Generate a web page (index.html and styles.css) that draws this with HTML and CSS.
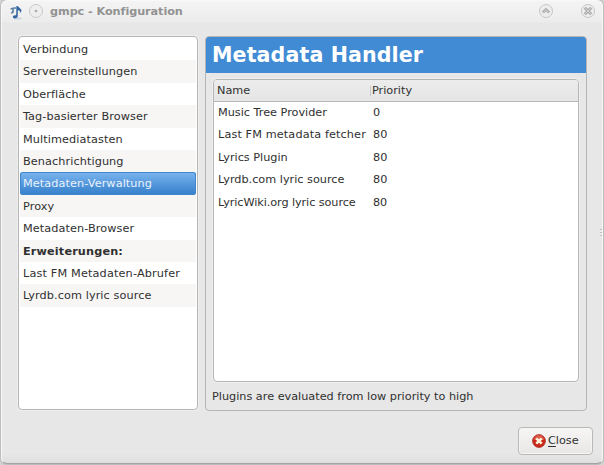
FILE: index.html
```html
<!DOCTYPE html>
<html lang="de">
<head>
<meta charset="utf-8">
<title>gmpc - Konfiguration</title>
<link rel="stylesheet" href="styles.css">
</head>
<body>
<div class="window">
  <header class="titlebar">
    <svg class="note" width="14" height="17" viewBox="0 0 14 17"><ellipse cx="9" cy="14.6" rx="4" ry="1" fill="#c9d4e0"/><path d="M7.4 2 9 2.3 12.5 6 11.8 9 10.3 6.6 8.8 6.2V12.3Q8.2 14.5 5.5 14.5 3.5 14.2 3.8 12.5 4.5 11 7.2 11.2z" fill="#34659f"/><path d="M1.5 4.3 4.8 3.2V8.2Q4 9.9 2 9.5 1.3 8.4 3.3 7.5V5.2L1.5 5.5z" fill="#54799f"/><path d="M4.5 3.4 7.8 2.8V4.8L4.5 5.3z" fill="#6e94bd"/></svg>
    <svg class="menu" width="16" height="16" viewBox="0 0 16 16"><circle cx="8" cy="8" r="6.5" fill="#eee" stroke="#c9c9c9"/><circle cx="8" cy="8" r="1.3" fill="#aaa"/></svg>
    <h1 class="caption">gmpc - Konfiguration</h1>
    <svg class="shade" width="16" height="16" viewBox="0 0 16 16"><circle cx="8" cy="8" r="6.5" fill="#eee" stroke="#c6c6c6"/><path d="M4.8 9.6 8 6.6 11.2 9.6" fill="none" stroke="#aaa" stroke-width="2.8"/><path d="M5 9.5 8 6.7 11 9.5" fill="none" stroke="#ddd" stroke-width=".8"/></svg>
    <svg class="close" width="16" height="16" viewBox="0 0 16 16"><circle cx="8" cy="8" r="6.5" fill="#eee" stroke="#c6c6c6"/><path d="M4.8 4.8 11.2 11.2M11.2 4.8 4.8 11.2" stroke="#aaa" stroke-width="3"/><path d="M5.3 5.3 10.7 10.7M10.7 5.3 5.3 10.7" stroke="#ddd" stroke-width=".9"/></svg>
  </header>
  <main class="content">
    <ul class="sidebar">
      <li>Verbindung</li>
      <li>Servereinstellungen</li>
      <li>Oberfläche</li>
      <li>Tag-basierter Browser</li>
      <li>Multimediatasten</li>
      <li>Benachrichtigung</li>
      <li class="selected">Metadaten-Verwaltung</li>
      <li>Proxy</li>
      <li>Metadaten-Browser</li>
      <li class="heading">Erweiterungen:</li>
      <li class="plugin">Last FM Metadaten-Abrufer</li>
      <li>Lyrdb.com lyric source</li>
    </ul>
    <section class="panel">
      <h2 class="banner">Metadata Handler</h2>
      <div class="table">
        <div class="row head"><span>Name</span><span class="priority">Priority</span></div>
        <div class="row"><span>Music Tree Provider</span><span>0</span></div>
        <div class="row wide"><span>Last FM metadata fetcher</span><span>80</span></div>
        <div class="row"><span>Lyrics Plugin</span><span>80</span></div>
        <div class="row"><span>Lyrdb.com lyric source</span><span>80</span></div>
        <div class="row narrow"><span>LyricWiki.org lyric source</span><span>80</span></div>
      </div>
      <p class="hint">Plugins are evaluated from low priority to high</p>
    </section>
  </main>
  <footer class="actions">
    <button class="button"><svg width="14" height="14" viewBox="0 0 14 14"><circle cx="7" cy="7" r="6.4" fill="#c9281b" stroke="#a62a20" stroke-width=".8"/><path d="M2 6a5 5 0 0 1 10 0" fill="#dc5a48"/><path d="M4.3 4.3 9.7 9.7M9.7 4.3 4.3 9.7" stroke="#fff3d8" stroke-width="2.6"/></svg><span><u>C</u>lose</span></button>
  </footer>
  <i class="grip"></i>
</div>
</body>
</html>
```
FILE: styles.css
```css
* { box-sizing: border-box; }
body {
  margin: 0;
  width: 604px;
  height: 465px;
  overflow: hidden;
  background: #d2d2d2;
  font: 11.25px/22.4px "DejaVu Sans", sans-serif;
  color: #303030;
}
.window {
  position: relative;
  display: flex;
  flex-direction: column;
  width: 602px;
  height: 464px;
  margin-left: 1px;
  border: 1px solid #f8f8f8;
  border-bottom: 1px solid #a3a3a3;
  border-radius: 6px;
  background: linear-gradient(#f4f4f4, #ececec 21px, #e7e7e7 22px, #e7e7e7 452px, #dfdfdf);
  box-shadow: 0 0 0 1px #bcbcbc;
}
.titlebar {
  display: flex;
  align-items: flex-start;
  height: 35px;
  padding: 2px 6px 0 7px;
}
.note { margin-top: 1px; }
.menu { margin-left: 5px; }
.caption {
  flex: 1;
  margin: 0 0 0 6px;
  font-size: 11.25px;
  line-height: 17px;
  letter-spacing: -0.07px;
  color: #929292;
}
.close { margin-left: 26px; }
.content {
  display: flex;
  gap: 7px;
  height: 375px;
  padding: 0 15px 0 16px;
}
.sidebar {
  width: 180px;
  height: 374px;
  margin: 0;
  padding: 1px 1px 0;
  list-style: none;
  border: 1px solid #b5b5b5;
  border-radius: 4px;
  background: #fff;
  box-shadow: 0 0 0 1px #efefef;
  overflow: hidden;
}
.sidebar li {
  height: 22.4px;
  padding-left: 3px;
  line-height: 23.4px;
  letter-spacing: 0.09px;
}
.sidebar li:nth-child(even) { background: #f7f6f5; }
.sidebar .plugin { letter-spacing: 0.16px; }
.sidebar .heading {
  font-weight: bold;
  letter-spacing: 0.15px;
}
.sidebar .selected {
  border-radius: 3px;
  background: linear-gradient(#7bb6ef, #5799dd 50%, #347fca);
  box-shadow: inset 0 0 0 1px #4286cb;
  color: #e9f2fb;
}
.panel {
  flex: 1;
  border: 1px solid #b5b5b5;
  border-radius: 4px;
  overflow: hidden;
}
.banner {
  height: 36px;
  margin: 0;
  padding-left: 6px;
  background: #418bd4;
  color: #fff;
  font-size: 20.6px;
  line-height: 36px;
  letter-spacing: 0.1px;
}
.table {
  height: 303px;
  margin: 6px 7px 0;
  border: 1px solid #b5b5b5;
  border-radius: 4px;
  background: #fff;
  box-shadow: 0 0 0 1px #efefef;
  overflow: hidden;
}
.row {
  display: grid;
  grid-template-columns: 155px 1fr;
  height: 22.4px;
  padding-left: 4px;
}
.wide { letter-spacing: 0.12px; }
.narrow { letter-spacing: -0.08px; }
.head {
  height: 22px;
  padding-left: 3px;
  line-height: 21px;
  border-bottom: 1px solid #b9b9b9;
  background: linear-gradient(#ececec, #e5e5e5);
}
.priority {
  height: 10px;
  margin: 6px 0 0 -2px;
  padding-left: 1px;
  line-height: 10px;
  border-left: 1px solid #c8c8c8;
}
.hint { margin: 4px 0 0 6px; }
.actions {
  display: flex;
  justify-content: flex-end;
  padding: 16px 9px 0 0;
}
.button {
  display: flex;
  align-items: center;
  gap: 2px;
  width: 75px;
  height: 28px;
  padding: 0 0 0 13px;
  border: 1px solid #b9b9b9;
  border-radius: 4px;
  background: linear-gradient(#f7f6f5, #e8e7e5);
  box-shadow: inset 0 0 0 1px #f5f5f4;
  font: inherit;
  color: inherit;
}
.button u { text-underline-offset: 2px; }
.grip {
  position: absolute;
  right: 0;
  top: 228px;
  width: 2px;
  height: 8px;
  background: repeating-linear-gradient(#bbb 0 1px, #eee 1px 3px);
}
```
